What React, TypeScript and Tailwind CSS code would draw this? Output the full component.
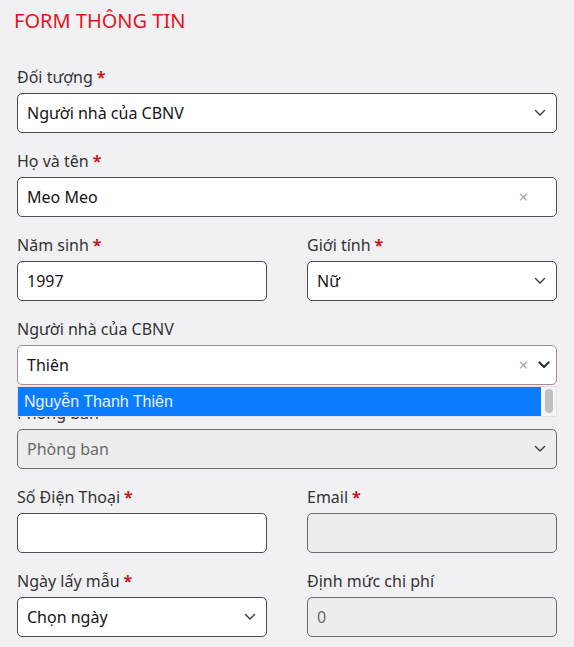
import { ReactNode } from "react";

const Star = () => <span className="text-[#c8161d] font-bold ml-1">*</span>;

const Label = ({ text, required }: { text: string; required?: boolean }) => (
  <div className="h-6 leading-6 text-base text-[#333] mb-1">
    {text}
    {required && <Star />}
  </div>
);

const Chevron = ({ bold }: { bold?: boolean }) => (
  <svg width="12" height="8" viewBox="0 0 12 8" fill="none">
    <path
      d="M1.5 1.5 6 6l4.5-4.5"
      stroke={bold ? "#333" : "#444"}
      strokeWidth={bold ? 2.2 : 1.5}
      strokeLinecap="round"
      strokeLinejoin="round"
    />
  </svg>
);

const Clear = () => (
  <span className="text-[#a5a5a5] text-[16px] leading-none">×</span>
);

type BoxProps = {
  value?: string;
  muted?: boolean;
  disabled?: boolean;
  focused?: boolean;
  right?: ReactNode;
};

const Box = ({ value, muted, disabled, focused, right }: BoxProps) => (
  <div
    className={`h-10 flex items-center pl-[9px] pr-[10px] rounded-[5px] border ${
      focused ? "border-[#a7889f]" : disabled ? "border-[#6b6b6b]" : "border-[#4d4d4d]"
    } ${disabled ? "bg-[#ededee]" : "bg-white"}`}
  >
    <span className={`flex-1 text-base ${muted ? "text-[#6a6a6a]" : "text-[#151515]"}`}>
      {value}
    </span>
    {right}
  </div>
);

const Field = ({
  label,
  required,
  children,
}: {
  label: string;
  required?: boolean;
  children: ReactNode;
}) => (
  <div className="flex-1 mb-4">
    <Label text={label} required={required} />
    {children}
  </div>
);

export default function App() {
  return (
    <div
      className="min-h-[647px] bg-[#f1f1f4] px-[17px] pt-[7px] overflow-hidden"
      style={{ fontFamily: '"Noto Sans", "Open Sans", sans-serif' }}
    >
      <h1 className="-ml-[3px] text-[20px] leading-7 text-[#e5141b] mb-[30px]">
        FORM THÔNG TIN
      </h1>

      <Field label="Đối tượng" required>
        <Box value="Người nhà của CBNV" right={<Chevron />} />
      </Field>

      <Field label="Họ và tên" required>
        <Box value="Meo Meo" right={<span className="mr-[18px]"><Clear /></span>} />
      </Field>

      <div className="flex gap-10">
        <Field label="Năm sinh" required>
          <Box value="1997" />
        </Field>
        <Field label="Giới tính" required>
          <Box value="Nữ" right={<Chevron />} />
        </Field>
      </div>

      <div className="relative">
        <Field label="Người nhà của CBNV">
          <Box
            value="Thiên"
            focused
            right={
              <div className="flex items-center gap-[10px] -mr-[4px]">
                <Clear />
                <Chevron bold />
              </div>
            }
          />
        </Field>
        <div className="absolute left-0 right-0 top-[69px] h-[31px] flex z-10 bg-white border border-[#e2e2e2]">
          <div
            className="flex-1 bg-[#0a7cff] text-[#eaf2ff] pl-[6px] leading-[29px] text-base"
            style={{ fontFamily: '"Liberation Sans", Arial, sans-serif' }}
          >
            Nguyễn Thanh Thiên
          </div>
          <div className="w-[15px] bg-[#f5f5f5] flex justify-center pt-[2px]">
            <div className="w-[8px] h-[24px] rounded-full bg-[#c1c1c1]" />
          </div>
        </div>
      </div>

      <Field label="Phòng ban">
        <Box value="Phòng ban" muted disabled right={<Chevron />} />
      </Field>

      <div className="flex gap-10">
        <Field label="Số Điện Thoại" required>
          <Box />
        </Field>
        <Field label="Email" required>
          <Box disabled />
        </Field>
      </div>

      <div className="flex gap-10">
        <Field label="Ngày lấy mẫu" required>
          <Box value="Chọn ngày" right={<Chevron />} />
        </Field>
        <Field label="Định mức chi phí">
          <Box value="0" muted disabled />
        </Field>
      </div>
    </div>
  );
}
